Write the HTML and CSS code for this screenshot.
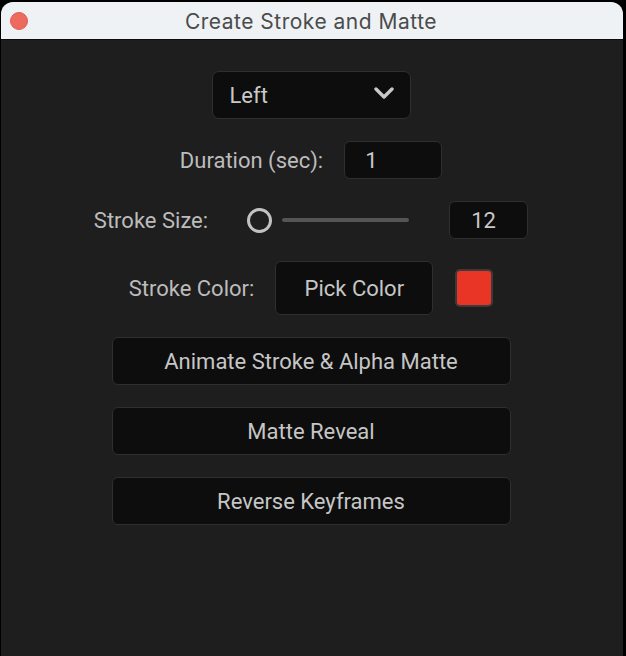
FILE: index.html
```html
<!DOCTYPE html>
<html>
<head>
<meta charset="utf-8">
<link rel="stylesheet" href="styles.css">
</head>
<body>
<div class="window">
  <div class="titlebar">
    <span class="close"></span>
    <span class="title">Create Stroke and Matte</span>
  </div>
  <div class="content">
    <div class="select">
      <span>Left</span>
      <svg class="chev" width="20" height="12" viewBox="0 0 20 12"><path d="M2 2 L10 10 L18 2" fill="none" stroke="#c9c9c9" stroke-width="3.4" stroke-linecap="round" stroke-linejoin="round"/></svg>
    </div>
    <div class="row row-duration">
      <span class="label">Duration (sec):</span>
      <div class="field field-duration">1</div>
    </div>
    <div class="row row-size">
      <span class="label">Stroke Size:</span>
      <div class="slider">
        <span class="thumb"></span>
        <span class="track"></span>
      </div>
      <div class="field field-size">12</div>
    </div>
    <div class="row row-color">
      <span class="label">Stroke Color:</span>
      <div class="btn btn-pick">Pick Color</div>
      <div class="swatch"></div>
    </div>
    <div class="btn btn-wide">Animate Stroke &amp; Alpha Matte</div>
    <div class="btn btn-wide">Matte Reveal</div>
    <div class="btn btn-wide">Reverse Keyframes</div>
  </div>
</div>
</body>
</html>
```
FILE: styles.css
```css
html, body {
  margin: 0;
  padding: 0;
  background: #000;
  height: 656px;
  overflow: hidden;
}
.window {
  margin: 2px 3px 0 1px;
  height: 654px;
  border-radius: 12px 12px 0 0;
  overflow: hidden;
  background: #1e1e1e;
  display: flex;
  flex-direction: column;
}
.titlebar {
  height: 37px;
  background: #eff2f5;
  border-bottom: 1px solid #0c0c0c;
  display: flex;
  align-items: center;
  justify-content: center;
  position: relative;
}
.close {
  position: absolute;
  left: 9px;
  top: 10px;
  width: 18px;
  height: 18px;
  box-sizing: border-box;
  border-radius: 50%;
  background: #ee6a5f;
  border: 0.5px solid #e15b50;
}
.title {
  font-family: Inter, "Liberation Sans", sans-serif;
  font-size: 21px;
  color: #4b4b4b;
  letter-spacing: 0.5px;
  margin-right: 2px;
  margin-top: 1px;
}
.content {
  flex: 1;
  display: flex;
  flex-direction: column;
  align-items: center;
  gap: 22px;
  padding-top: 31px;
  padding-right: 2px;
  font-family: Roboto, "Open Sans", sans-serif;
  font-size: 22px;
  color: #c4c4c4;
}
.select {
  width: 197px;
  height: 46px;
  box-sizing: content-box;
  background: #0d0d0d;
  border: 1px solid #2f2f2f;
  border-radius: 7px;
  display: flex;
  align-items: center;
  justify-content: space-between;
}
.select span {
  margin-left: 17px;
  color: #c9c9c9;
}
.chev {
  margin-right: 16px;
  margin-top: -4px;
}
.row {
  display: flex;
  align-items: center;
}
.label {
  white-space: nowrap;
  color: #bcbcbc;
}
.field {
  background: #0d0d0d;
  border: 1px solid #2f2f2f;
  border-radius: 6px;
  height: 36px;
  display: flex;
  align-items: center;
  color: #c9c9c9;
}
.row-duration { gap: 21px; }
.field-duration { width: 76px; padding-left: 20px; }
.slider {
  width: 162px;
  margin-left: 39px;
  height: 38px;
  display: flex;
  align-items: center;
}
.thumb {
  width: 19px;
  height: 19px;
  border: 3.5px solid #c2c2c2;
  border-radius: 50%;
  flex: none;
}
.track {
  flex: 1;
  height: 4px;
  background: #555;
  border-radius: 2px;
  margin-left: 10px;
}
.field-size {
  width: 56px;
  padding-left: 21px;
  margin-left: 40px;
}
.row-color { gap: 21px; }
.btn {
  background: #0d0d0d;
  border: 1px solid #2f2f2f;
  border-radius: 6px;
  display: flex;
  align-items: center;
  justify-content: center;
  color: #c6c6c6;
  white-space: nowrap;
}
.btn-pick {
  width: 156px;
  height: 52px;
}
.swatch {
  width: 34px;
  height: 34px;
  margin-left: 1px;
  background: #e93526;
  border: 2px solid #3a3a3a;
  border-radius: 5px;
}
.btn-wide {
  width: 397px;
  height: 46px;
}
```
